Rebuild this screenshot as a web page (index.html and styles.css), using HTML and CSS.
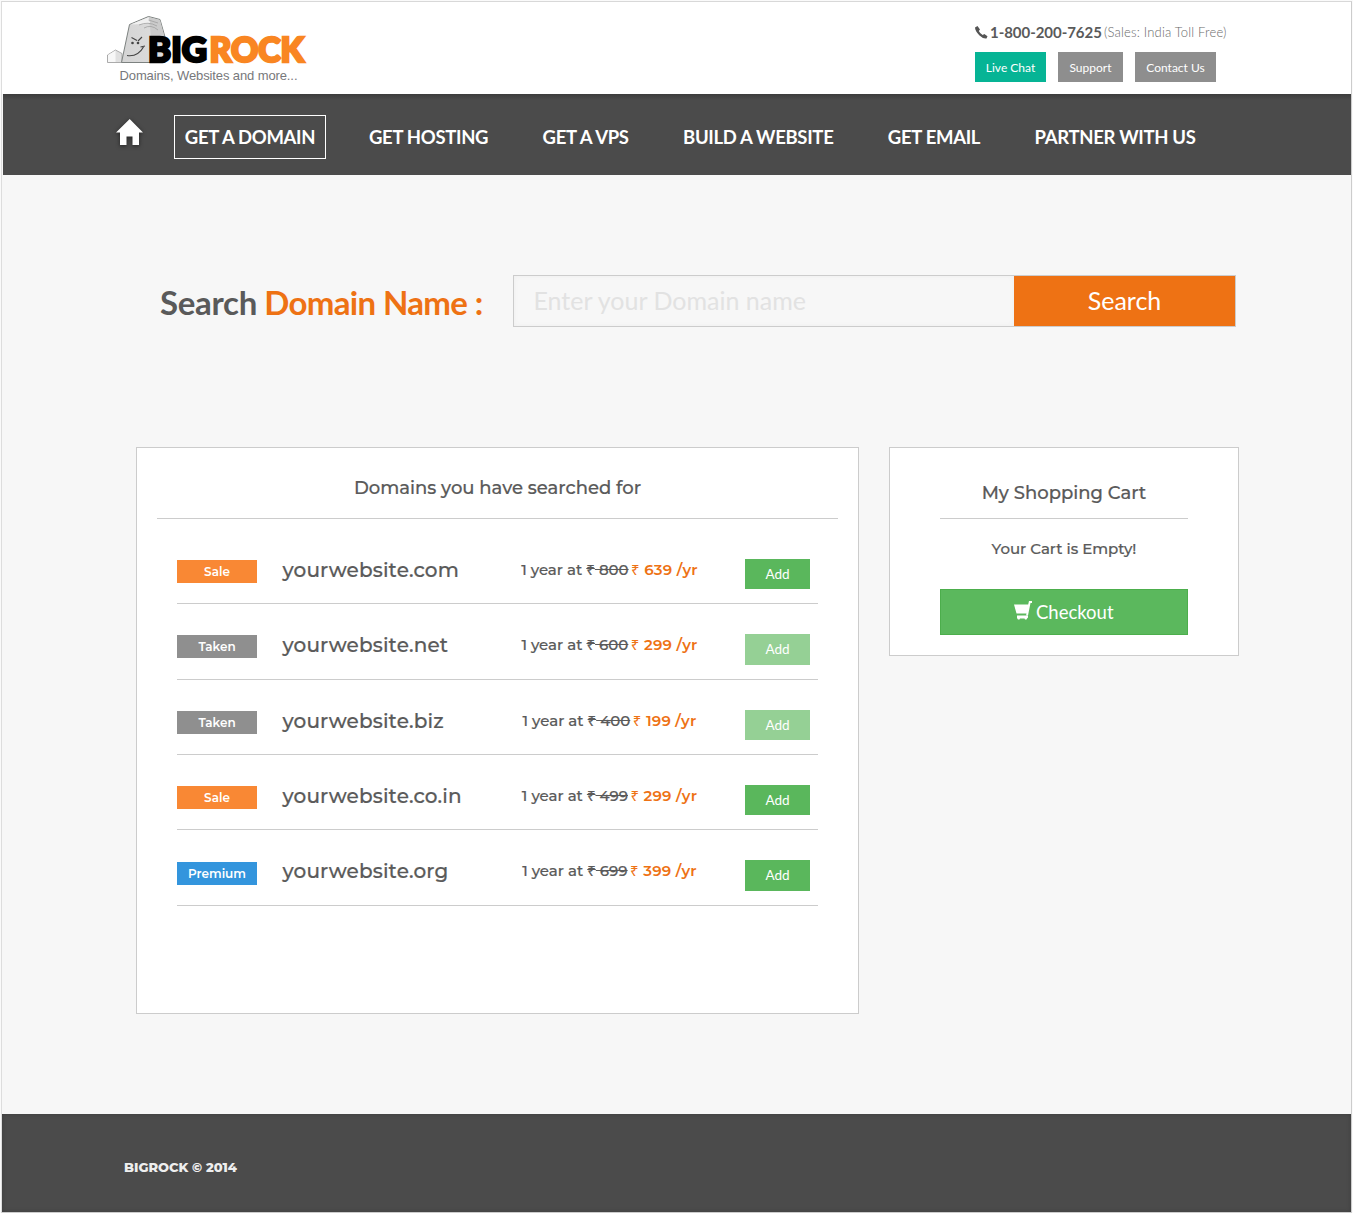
FILE: index.html
```html
<!DOCTYPE html>
<html lang="en">
<head>
<meta charset="utf-8">
<title>BigRock</title>
<link rel="stylesheet" href="styles.css">
</head>
<body>
<div class="page">
  <header class="header">
    <svg class="logo" width="204" height="72" viewBox="0 0 204 72">
      <defs><linearGradient id="stone" x1="0" x2="1" y1="0" y2="0"><stop offset="0" stop-color="#d4d4d4"/><stop offset="1" stop-color="#dedede"/></linearGradient></defs>
      <path d="M.500 47.500V40L8.500 35L15 38.500V47.500Z" fill="#e0e0e0" stroke="#999" stroke-width=".8"/>
      <path d="M1 40L8.500 35.500V47H1Z" fill="#f7f7f7"/>
      <path d="M14.500 47.500L22.500 9.500L41.500 1.500L53 4.500L58 22V47.500Z" fill="url(#stone)" stroke="#7d8280" stroke-width="1"/>
      <path d="M41.500 2L53 5L57.500 22L44 22L43 12Z" fill="#cbcbcb"/>
      <path d="M23.500 9.500L41.500 2.200L43 8L36 9Z" fill="#f0f0f0"/>
      <path d="M32 10Q41 6 50 11M37 13Q44 9 51 15M41.500 5L51 8" fill="none" stroke="#999" stroke-width=".7"/>
      <path d="M24.500 22.500L30 25.500M35 22L31 26M20 40.500Q31 42 36.500 32M33.500 32L38 31" fill="none" stroke="#444" stroke-width="1.100"/>
      <circle cx="25.500" cy="28" r="1.300" fill="#444"/><circle cx="31" cy="28" r="1.300" fill="#444"/>
      <text class="logo-word logo-big" x="41" y="47" textLength="59" lengthAdjust="spacingAndGlyphs">BIG</text>
      <text class="logo-word logo-rock" x="102.500" y="47" textLength="94.500" lengthAdjust="spacingAndGlyphs">ROCK</text>
      <text class="tagline" x="12.500" y="65" textLength="178">Domains, Websites and more...</text>
    </svg>
    <div class="contact">
      <div class="phone">
        <svg width="13" height="13" viewBox="0 0 13 13"><path d="M0 1.500L2.500 0L5 3.500L3.800 5Q5 7.500 7.700 9L9.300 8L12.500 10.300L11.500 12.500Q8.500 13.200 4.500 9.500Q0 5 0 1.500Z" fill="#555"/></svg>
        <b>1-800-200-7625</b><span class="toll">(Sales: India Toll Free)</span>
      </div>
      <div class="actions"><a class="pill chat">Live Chat</a><a class="pill support">Support</a><a class="pill contact-us">Contact Us</a></div>
    </div>
  </header>
  <nav class="nav">
    <svg class="home" width="28" height="27" viewBox="0 0 28 27"><path d="M13.700 0L27 13.500H23V26H16.500V17.500H10.500V26H4V13.500H0Z" fill="#fff"/></svg>
    <a class="active">GET A DOMAIN</a><a>GET HOSTING</a><a>GET A VPS</a><a>BUILD A WEBSITE</a><a>GET EMAIL</a><a>PARTNER WITH US</a>
  </nav>
  <main>
    <section class="search">
      <h1>Search <span>Domain Name :</span></h1>
      <div class="field"><span class="placeholder">Enter your Domain name</span><span class="go">Search</span></div>
    </section>
    <div class="columns">
      <section class="results">
        <h2>Domains you have searched for</h2>
        <div class="rows">
          <div class="row"><span class="tag sale">Sale</span><span class="name">yourwebsite.com</span><span class="price">1 year at <s><i>₹</i> 800</s><em><i>₹</i> 639 /yr</em></span><span class="add">Add</span></div>
          <div class="row"><span class="tag taken">Taken</span><span class="name">yourwebsite.net</span><span class="price">1 year at <s><i>₹</i> 600</s><em><i>₹</i> 299 /yr</em></span><span class="add off">Add</span></div>
          <div class="row"><span class="tag taken">Taken</span><span class="name">yourwebsite.biz</span><span class="price">1 year at <s><i>₹</i> 400</s><em><i>₹</i> 199 /yr</em></span><span class="add off">Add</span></div>
          <div class="row"><span class="tag sale">Sale</span><span class="name">yourwebsite.co.in</span><span class="price">1 year at <s><i>₹</i> 499</s><em><i>₹</i> 299 /yr</em></span><span class="add">Add</span></div>
          <div class="row"><span class="tag premium">Premium</span><span class="name">yourwebsite.org</span><span class="price">1 year at <s><i>₹</i> 699</s><em><i>₹</i> 399 /yr</em></span><span class="add">Add</span></div>
        </div>
      </section>
      <aside class="cart">
        <h2>My Shopping Cart</h2>
        <p>Your Cart is Empty!</p>
        <a class="checkout"><svg width="19" height="19" viewBox="0 0 19 19"><path d="M0 3.500H14.200L15 0H18V2H16.500L14 14.500H12L12.500 12.500H2.500Z" fill="#fff"/><path d="M3 14.500H14V16.500L13 17.500L12.500 18.500H11L10.500 17.500H6L5.500 18.500H4L3 17Z" fill="#fff"/></svg><span>Checkout</span></a>
      </aside>
    </div>
  </main>
  <footer class="footer">BIGROCK © 2014</footer>
</div>
</body>
</html>
```
FILE: styles.css
```css
* { box-sizing: border-box; }
body { margin: 0; background: #fafafa; font-family: Lato, sans-serif; color: #5a5a5a; }
.page { width: 1351px; height: 1212px; margin: 1px 0 0 1px; border: 1px solid #ccc; border-left-color: #ddd; border-top-color: #d8d8d8; background: #f7f7f7; display: flex; flex-direction: column; }
.header { height: 92px; background: #fff; display: flex; justify-content: space-between; padding: 13px 124px 0 105px; flex: none; }
.logo-word { font: 900 35px Lato, sans-serif; stroke-width: 2.6; }
.logo-big { fill: #000; stroke: #000; }
.logo-rock { fill: #f98622; stroke: #f98622; }
.tagline { font: 13px "Liberation Sans", sans-serif; fill: #77787b; }
.contact { width: 252px; padding-top: 6px; }
.phone { height: 21px; display: flex; align-items: center; font-size: 15px; white-space: nowrap; }
.phone svg { margin-right: 2px; margin-top: 1px; }
.phone b { width: 112px; font-weight: 700; letter-spacing: -.05px; }
.toll { margin-left: 2px; font-size: 13px; font-weight: 300; letter-spacing: .18px; color: #6a6a6a; }
.actions { display: flex; margin-top: 10px; }
.pill { height: 30px; line-height: 32px; text-align: center; color: #fff; background: #8e8e8e; font-size: 12px; }
.chat { width: 71px; background: #06b495; }
.support { width: 65px; margin-left: 12px; }
.contact-us { width: 81px; margin-left: 12px; }
.nav { height: 81px; flex: none; margin-left: 1px; background: linear-gradient(#3c3c3c, #4b4b4b 6px); display: flex; padding: 21px 0 0 113px; color: #fff; font-size: 18.5px; font-weight: 700; white-space: nowrap; }
.nav a { height: 44px; line-height: 45px; margin-right: 54.4px; letter-spacing: -.32px; }
.home { margin: 4px 30px 0 0; filter: drop-shadow(0 1px 2px #222); }
.nav .active { width: 152px; border: 1px solid #fff; line-height: 43px; text-align: center; margin-right: 43px; }
main { flex: 1; }
.search { display: flex; height: 152px; padding: 100px 0 0 158px; }
h1 { width: 353px; margin: 0; font-size: 33px; line-height: 54px; font-weight: 700; white-space: nowrap; letter-spacing: -.3px; }
h1 span { color: #ee7214; letter-spacing: -.65px; margin-left: -.5px; }
.field { display: flex; width: 723px; height: 52px; border: 1px solid #ccc; font-size: 25px; line-height: 48px; }
.placeholder { width: 500px; padding-left: 19.5px; color: #e2e2e2; box-shadow: inset 0 0 5px #eee; }
.go { flex: 1; background: #ee7214; color: #fff; text-align: center; }
.columns { display: flex; gap: 30px; padding: 120px 0 0 134px; align-items: flex-start; font-family: Montserrat, Inter, sans-serif; font-weight: 500; }
.results, .cart { background: #fff; border: 1px solid #ccc; }
.results { width: 723px; height: 567px; padding: 0 20px; }
h2 { margin: 0; text-align: center; font-weight: 500; border-bottom: 1px solid #ccc; white-space: nowrap; }
h2, .name, .price, .cart p { -webkit-text-stroke: .2px currentColor; }
.results h2 { height: 71px; line-height: 80px; font-size: 18px; }
.rows { padding: 9.8px 20px 0; }
.row { height: 75.4px; border-bottom: 1px solid #ccc; display: flex; align-items: flex-start; padding-top: 30px; white-space: nowrap; }
.tag { width: 80px; height: 23px; line-height: 24px; margin-top: 1.2px; text-align: center; color: #fff; font-size: 12px; font-weight: 600; }
.sale { background: #f98834; }
.taken { background: #8f8f8f; }
.premium { background: #3395dd; }
.name { width: 208px; padding-left: 25.5px; font-size: 20px; line-height: 22px; letter-spacing: .15px; }
.price { width: 280px; padding-left: 9px; text-align: center; font-size: 15px; line-height: 21px; }
.price i { font: 400 15px/1 "Noto Sans", sans-serif; }
.price em { margin-left: 2.5px; font-style: normal; color: #ee7214; font-weight: 600; letter-spacing: .2px; -webkit-text-stroke: 0; }
.add { width: 65px; height: 30.5px; line-height: 31px; background: #5ab75c; color: #fff; font-family: Lato, sans-serif; font-size: 13.5px; font-weight: 400; text-align: center; }
.off { background: #95d095; }
.cart { width: 350px; height: 209px; padding: 0 50px; }
.cart h2 { height: 71px; line-height: 90px; font-size: 18px; }
.cart p { margin: 20px 0 30px; height: 20px; line-height: 20px; text-align: center; font-size: 15px; }
.checkout { height: 46px; background: #5bb85d; border: 1px solid #4cae4c; display: flex; align-items: center; justify-content: center; gap: 2.5px; color: #fff; font-family: Lato, sans-serif; font-weight: 400; font-size: 18.5px; }
.checkout svg { margin-top: -4px; }
.footer { height: 98px; flex: none; background: #4b4b4b; box-shadow: inset 0 0 4px #3c3c3c; color: #eee; padding-left: 122px; font: 800 13px/107px Montserrat, Inter, sans-serif; }
```
